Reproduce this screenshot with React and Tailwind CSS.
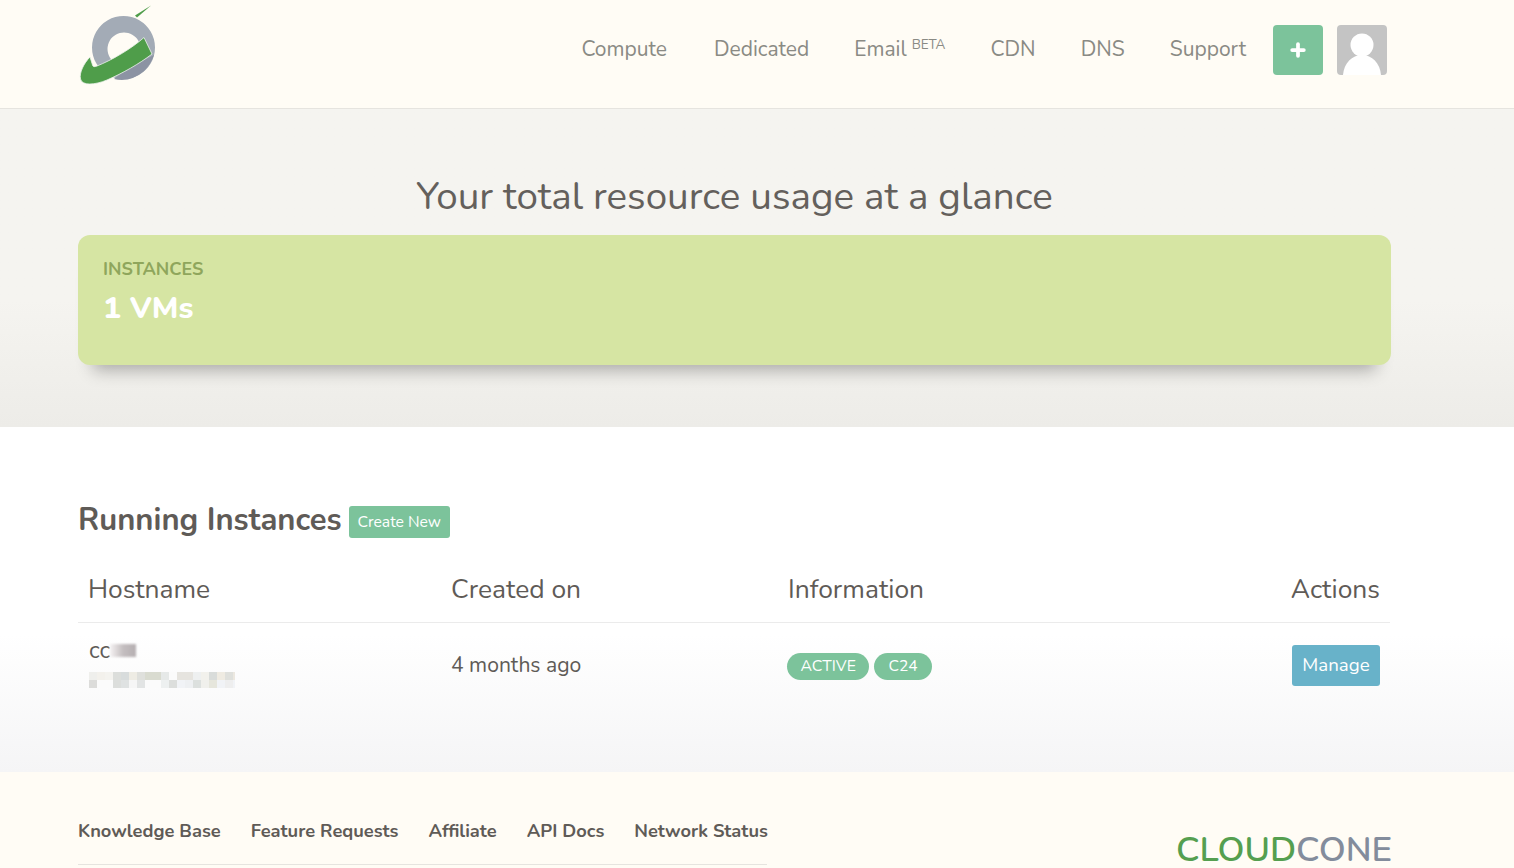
import React from 'react';
import { Plus } from 'lucide-react';

const navItems = ['Compute', 'Dedicated', 'Email', 'CDN', 'DNS'];
const footerLinks = ['Knowledge Base', 'Feature Requests', 'Affiliate', 'API Docs', 'Network Status'];

const mosaicTop = ['#efefec', '#f3f1ec', '#f4f3ef', '#dcdedb', '#d8dcdc', '#eeece4', '#dfe0dc', '#d9dbd0', '#d9dbd0', '#e6e9e8', '#fbfbfb', '#e6e4df', '#e6e4df', '#eef0f0', '#f2f1ec', '#d9dcda', '#efebe2', '#dfe0dc', '#ece8e0'];
const mosaicBottom = ['#dcdcda', '#fbfbfb', '#fbfbfb', '#dcdedc', '#dfe2e2', '#f6f6f6', '#e2e4e4', '#fbfbfb', '#fbfbfb', '#edf0f0', '#dcdedc', '#f1f3f6', '#eef0f2', '#dce0de', '#f0f0ec', '#e6e6dc', '#f1f3f6', '#eeeeee', '#f1f3f6'];

const Logo = () => (
  <svg width="80" height="90" viewBox="78 0 80 90">
    {/* ring */}
    <path fillRule="evenodd" fill="#a3abb6" d="M123.5 16a31.5 31.5 0 1 0 0.01 0Z M124 32.5a16.5 16.5 0 1 0 0.01 0Z" />
    {/* darker underside */}
    <path d="M114 79 Q130 83 144 71 Q151 64 154 55 L128 68 Z" fill="#8c93a3" />
    {/* swoosh */}
    <path d="M90 57 C84 63 79 73 80.5 79 C82 86 95 85 107 80 C123 73 139 64 152 54 L144 37.5 C131 49 112 60 97 66 C94.5 67 93 67 92.5 65 Z" fill="#4f9d4a" stroke="#eef2ee" strokeWidth="0.8" />
    {/* streak */}
    <path d="M135 15.5 L137 17.5 L151 5.5 Z" fill="#4f9d4a" />
  </svg>
);

const Mosaic = () => (
  <svg width="146" height="16" viewBox="0 0 146 16" className="block">
    {mosaicTop.map((c, i) => <rect key={i} x={i * 8} y="0" width="8" height="8" fill={c} />)}
    {mosaicBottom.map((c, i) => <rect key={i} x={i * 8} y="8" width="8" height="8" fill={c} />)}
  </svg>
);

export default function App() {
  return (
    <div className="h-screen overflow-hidden bg-white font-['Nunito','Open_Sans',sans-serif] text-[#5f5b57]">
      {/* Header */}
      <header className="h-[109px] bg-[#fffcf5] border-b border-[#e6e4df] flex items-center pl-[78px] pr-[127px] justify-between">
        <div className="w-[80px] h-[90px] self-start"><Logo /></div>
        <nav className="flex items-center mt-[-8px]">
          {navItems.map((item) => (
            <span key={item} className="text-[21px] leading-[28px] mb-[2px] text-[#8a8a84] mr-[45px] first:mr-[47px] whitespace-nowrap">
              {item}
              {item === 'Email' && <sup className="ml-[5px] text-[13.5px] top-[-7px]">BETA</sup>}
            </span>
          ))}
          <span className="text-[21px] leading-[28px] mb-[2px] text-[#8a8a84] mr-[27px]">Support</span>
          <button className="w-[50px] h-[50px] rounded-[4px] bg-[#7cc39b] flex items-center justify-center text-white mr-[14px]">
            <Plus size={20} strokeWidth={4.5} />
          </button>
          <div className="w-[50px] h-[50px] rounded-[4px] bg-[#c4c4c4] overflow-hidden">
            <svg width="50" height="50" viewBox="0 0 50 50">
              <circle cx="25" cy="20" r="11.5" fill="#fff" />
              <path d="M6 50 C7 38 15 30 25 30 C35 30 43 38 44 50 Z" fill="#fff" />
            </svg>
          </div>
        </nav>
      </header>

      {/* Usage */}
      <section className="h-[318px] bg-gradient-to-b from-[#f5f4f0] from-60% to-[#edece8] pt-[64px]">
        <h1 className="text-[38.6px] leading-[48px] text-center w-[1469px] text-[#64605c] font-normal">Your total resource usage at a glance</h1>
        <div className="ml-[78px] mt-[14px] w-[1313px] h-[130px] rounded-[12px] bg-[#d6e5a3] pl-[25px] pt-[22px] shadow-[0_20px_16px_-15px_rgba(0,0,0,0.3)]">
          <div className="text-[18px] leading-[24px] font-bold text-[#8fa65c]">INSTANCES</div>
          <div className="mt-[7px] text-[30.4px] leading-[40px] font-extrabold text-white">1 VMs</div>
        </div>
      </section>

      {/* Instances */}
      <section className="h-[345px] bg-gradient-to-b from-white from-60% to-[#f5f5f6] pt-[75px] pl-[78px]">
        <div className="flex items-center gap-[7px] h-[34px]">
          <h2 className="text-[31px] leading-[34px] pt-[1px] font-bold text-[#5f5b57]">Running Instances</h2>
          <button className="mt-[5px] h-[32px] w-[101px] pt-[2px] rounded-[3px] bg-[#7cc39b] text-white text-[15.7px]">Create New</button>
        </div>
        <div className="w-[1312px] mt-[17px]">
          <div className="flex items-center h-[70px] pt-[4px] border-b border-[#ebebeb] text-[26.4px] text-[#5f5b57]">
            <div className="w-[373px] pl-[10px]">Hostname</div>
            <div className="w-[337px]">Created on</div>
            <div className="flex-1">Information</div>
            <div className="pr-[10px]">Actions</div>
          </div>
          <div className="flex items-center h-[84px]">
            <div className="w-[373px] pl-[11px]">
              <div className="text-[23px] leading-[20px] mt-[-2px] flex items-center">cc<span className="w-[26px] h-[13px] bg-gradient-to-r from-[#f6f3f3] via-[#c4bec0] to-[#b5afb1] blur-[1px]" /></div>
              <div className="mt-[11px]"><Mosaic /></div>
            </div>
            <div className="w-[336px] mt-[2px] text-[21.1px] text-[#5f5b57]">4 months ago</div>
            <div className="flex-1 mt-[2px] flex items-center gap-[5px]">
              <span className="h-[27px] px-[13.5px] rounded-full bg-[#7cc39b] text-white text-[15.8px] leading-[27px]">ACTIVE</span>
              <span className="h-[27px] px-[14px] rounded-full bg-[#7cc39b] text-white text-[15.6px] leading-[27px]">C24</span>
            </div>
            <button className="w-[88px] h-[41px] mr-[10px] rounded-[3px] bg-[#68b2c9] text-white text-[18.7px]">Manage</button>
          </div>
        </div>
      </section>

      {/* Footer */}
      <footer className="bg-[#fffcf5] h-[96px] pl-[78px] pt-[46px] flex items-start">
        <div className="w-[689px] h-[47px] border-b border-[#e6e4df] flex gap-[30px] text-[18.3px] leading-[26px] font-bold text-[#5f5b57] whitespace-nowrap">
          {footerLinks.map((link) => <span key={link}>{link}</span>)}
        </div>
        <div className="ml-[409px] mt-[15px] text-[34.8px] leading-[34px] font-semibold whitespace-nowrap">
          <span className="text-[#559f50]">CLOUD</span><span className="text-[#838c9c]">CONE</span>
        </div>
      </footer>
    </div>
  );
}
